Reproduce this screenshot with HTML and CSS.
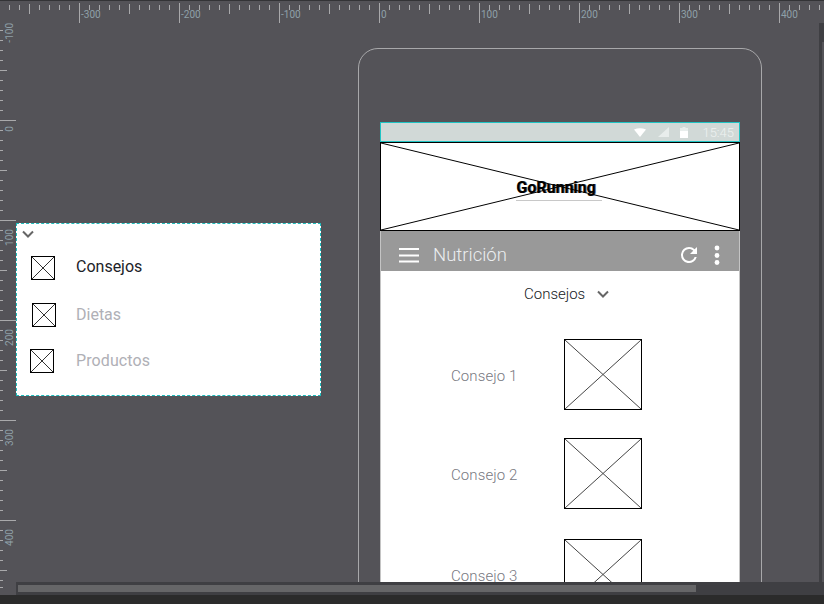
FILE: index.html
```html
<!DOCTYPE html>
<html lang="es">
<head>
    <meta charset="UTF-8">
    <meta name="viewport" content="width=device-width, initial-scale=1.0">
    <title>GoRunning - Nutrición</title>
    <link rel="stylesheet" href="styles.css">
</head>
<body>
    <div class="editor">
        <div class="ruler-top">
            <span class="h-num" style="left: 81px">-300</span>
            <span class="h-num" style="left: 181px">-200</span>
            <span class="h-num" style="left: 281px">-100</span>
            <span class="h-num" style="left: 381px">0</span>
            <span class="h-num" style="left: 481px">100</span>
            <span class="h-num" style="left: 581px">200</span>
            <span class="h-num" style="left: 681px">300</span>
            <span class="h-num" style="left: 781px">400</span>
        </div>

        <div class="middle">
            <div class="ruler-left">
                <span class="v-num" style="top: 0px">-100</span>
                <span class="v-num" style="top: 103px">0</span>
                <span class="v-num" style="top: 206px">100</span>
                <span class="v-num" style="top: 306px">200</span>
                <span class="v-num" style="top: 406px">300</span>
                <span class="v-num" style="top: 506px">400</span>
            </div>

            <div class="canvas">
                <!-- dropdown shown next to the phone -->
                <div class="menu-panel">
                    <svg class="chev chev-panel" viewBox="0 0 12 8"><path d="M1 1.5L6 6.5L11 1.5"/></svg>
                    <div class="menu-item item-a">
                        <svg class="ph" viewBox="0 0 100 100" preserveAspectRatio="none"><path d="M0 0L100 100M100 0L0 100"/></svg>
                        <span class="menu-text active">Consejos</span>
                    </div>
                    <div class="menu-item item-b">
                        <svg class="ph" viewBox="0 0 100 100" preserveAspectRatio="none"><path d="M0 0L100 100M100 0L0 100"/></svg>
                        <span class="menu-text">Dietas</span>
                    </div>
                    <div class="menu-item item-c">
                        <svg class="ph" viewBox="0 0 100 100" preserveAspectRatio="none"><path d="M0 0L100 100M100 0L0 100"/></svg>
                        <span class="menu-text">Productos</span>
                    </div>
                </div>

                <div class="phone">
                    <div class="screen">
                        <div class="status-bar">
                            <svg class="st-icon st-wifi" width="12" height="9" viewBox="0 0 12 9"><path class="st-full" d="M0 1.5Q6 -1 12 1.5L6 9Z"/></svg>
                            <svg class="st-icon" width="11" height="10" viewBox="0 0 11 10"><path class="st-dim" d="M11 0V10H0Z"/></svg>
                            <svg class="st-icon" width="8" height="11" viewBox="0 0 8 11"><path class="st-dim" d="M2.5 0H5.5V1H8V4H0V1H2.5Z"/><path class="st-full" d="M0 4H8V11H0Z"/></svg>
                            <span class="time">15:45</span>
                        </div>
                        <div class="banner">
                            <svg class="banner-x" viewBox="0 0 100 100" preserveAspectRatio="none"><path d="M0 0L100 100M100 0L0 100"/></svg>
                            <span class="logo-text">GoRunning</span>
                        </div>
                        <div class="app-bar">
                            <svg class="burger" width="20" height="16" viewBox="0 0 20 16"><path d="M0 2H20M0 8.5H20M0 14.5H20"/></svg>
                            <span class="app-title">Nutrición</span>
                            <svg class="refresh" width="24" height="24" viewBox="0 0 24 24"><path d="M17.65 6.35A7.96 7.96 0 0 0 12 4a8 8 0 1 0 7.73 10h-2.08A6 6 0 1 1 12 6c1.66 0 3.14.69 4.22 1.78L13 11h7V4z"/></svg>
                            <svg class="dots" width="6" height="20" viewBox="0 0 6 20"><circle cx="3" cy="3" r="2.4"/><circle cx="3" cy="10.5" r="2.4"/><circle cx="3" cy="17.5" r="2.4"/></svg>
                        </div>
                        <div class="picker">
                            <span>Consejos</span>
                            <svg class="chev" viewBox="0 0 12 8"><path d="M1 1.5L6 6.5L11 1.5"/></svg>
                        </div>
                        <div class="tips">
                            <div class="tip">
                                <span class="tip-label">Consejo 1</span>
                                <svg class="tip-img" viewBox="0 0 100 100" preserveAspectRatio="none"><path d="M0 0L100 100M100 0L0 100"/></svg>
                            </div>
                            <div class="tip">
                                <span class="tip-label">Consejo 2</span>
                                <svg class="tip-img" viewBox="0 0 100 100" preserveAspectRatio="none"><path d="M0 0L100 100M100 0L0 100"/></svg>
                            </div>
                            <div class="tip tip-last">
                                <span class="tip-label">Consejo 3</span>
                                <svg class="tip-img" viewBox="0 0 100 100" preserveAspectRatio="none"><path d="M0 0L100 100M100 0L0 100"/></svg>
                            </div>
                        </div>
                    </div>
                </div>
            </div>

            <div class="scroll-v"><div class="scroll-v-thumb"></div></div>
        </div>

        <div class="bottom">
            <div class="ruler-left ruler-stub"></div>
            <div class="scroll-h"><div class="scroll-h-thumb"></div></div>
        </div>
        <div class="footer"></div>
    </div>
</body>
</html>
```

FILE: styles.css
```css
html, body { margin: 0; padding: 0; }
body { width: 824px; height: 604px; overflow: hidden; background-color: #545358; font-family: Roboto, "Liberation Sans", sans-serif; }
svg { display: block; flex: none; }

.editor { display: flex; flex-direction: column; width: 824px; height: 604px; }

/* rulers */
.ruler-top {
    position: relative; height: 23px; flex: none; box-sizing: border-box;
    border-top: 1px solid #333336;
    background-image:
        linear-gradient(to right, #a9a9ab 1px, transparent 1px),
        linear-gradient(to right, #a9a9ab 1px, transparent 1px),
        linear-gradient(to right, #a9a9ab 1px, transparent 1px);
    background-repeat: repeat-x;
    background-size: 100px 20px, 100px 10px, 10px 5px;
    background-position: 79px 2px, 29px 3px, 9px 4px;
}
.h-num { position: absolute; top: 8px; font-size: 10px; line-height: 12px; color: #8fa0a8; }
.middle { display: flex; height: 559px; flex: none; }
.ruler-left {
    position: relative; width: 16px; flex: none;
    background-image:
        linear-gradient(#a9a9ab 1px, transparent 1px),
        linear-gradient(#a9a9ab 1px, transparent 1px),
        linear-gradient(#a9a9ab 1px, transparent 1px);
    background-repeat: repeat-y;
    background-size: 16px 100px, 7px 100px, 3px 10px;
    background-position: 0 97px, 0 47px, 0 7px;
}
.v-num {
    position: absolute; left: 5px; font-size: 10px; line-height: 10px; color: #8fa0a8;
    writing-mode: vertical-rl; transform: rotate(180deg);
}

/* free canvas */
.canvas { position: relative; flex: 1; overflow: hidden; }

.menu-panel {
    position: absolute; left: 0; top: 200px; width: 305px; height: 173px; box-sizing: border-box;
    background-color: white; border: 1px dashed #1fbcbc;
}
.chev { width: 12px; height: 8px; fill: none; stroke: #666; stroke-width: 2; }
.chev-panel { margin: 6px 0 0 5px; }
.menu-item { display: flex; align-items: center; height: 24px; }
.menu-item .ph { width: 24px; height: 24px; box-sizing: border-box; border: 1px solid black; }
.menu-text { position: relative; top: -1px; font-size: 16px; color: #b0b0b6; }
.item-a { margin: 18px 0 0 14px; }
.item-a .menu-text { margin-left: 21px; top: -2px; }
.item-b { margin: 23px 0 0 15px; }
.item-b .menu-text { margin-left: 20px; }
.item-c { margin: 22px 0 0 13px; }
.item-c .menu-text { margin-left: 22px; letter-spacing: 0.1px; }
.ph path { stroke: #333; stroke-width: 1; fill: none; vector-effect: non-scaling-stroke; }
.menu-text.active { color: #1c2228; }

.phone {
    position: absolute; left: 342px; top: 25px; width: 404px; height: 640px; box-sizing: border-box;
    border: 1px solid #a8a8aa; border-radius: 20px; padding: 73px 0 0 21px;
}
.screen { width: 360px; height: 566px; box-sizing: border-box; background-color: white; border: solid #c4c4c4; border-width: 0 1px; }

.status-bar {
    display: flex; align-items: center; justify-content: flex-end; height: 20px; box-sizing: border-box;
    background-color: #d1d9d7; border: 1px solid #1fc4c4; margin: 0 -1px; padding-right: 5px;
}
.st-icon { margin-right: 11px; }
.st-wifi { margin-right: 12px; }
.st-full { fill: white; }
.st-dim { fill: #e8edec; }
.time { margin-left: 3px; font-size: 13px; font-weight: 300; color: #eef2f1; }

.banner { position: relative; display: flex; align-items: center; justify-content: center; height: 89px; box-sizing: border-box; margin: 0 -1px; border: 1px solid black; }
.banner-x { position: absolute; left: 0; top: 0; width: 100%; height: 100%; }
.banner-x path { stroke: black; stroke-width: 1; fill: none; vector-effect: non-scaling-stroke; }
.logo-text {
    position: relative; top: 3px; left: -1px; padding: 0 6px 3px 0; font-size: 16px; font-weight: 700; color: black;
    border-bottom: 1px solid #c8c8c8; text-shadow: 1px 0 0 rgba(0, 0, 0, 0.6);
}

.app-bar { display: flex; align-items: center; height: 40px; box-sizing: border-box; padding: 7px 18px 0; background-color: #999; color: #eee; }
.burger { fill: none; stroke: white; stroke-width: 2.2; }
.app-title { flex: 1; margin-left: 14px; font-size: 18.5px; font-weight: 300; color: #eceef0; }
.refresh { fill: white; margin-right: 13px; }
.dots { fill: white; margin-right: 1px; }

.picker { display: flex; align-items: center; gap: 12px; height: 46px; padding-left: 143px; font-size: 15px; font-weight: 300; color: #15181c; }

.tips { padding-top: 22px; }
.tip { display: flex; align-items: center; height: 71px; padding-left: 70px; margin-bottom: 28px; }
.tip-last { margin-top: 30px; }
.tip-label { width: 113px; padding-top: 3px; font-size: 15px; font-weight: 300; color: #78787f; letter-spacing: 0.1px; }
.tip-img { width: 78px; height: 71px; box-sizing: border-box; border: 1px solid black; }
.tip-img path { stroke: #444; stroke-width: 1; fill: none; vector-effect: non-scaling-stroke; }

/* scrollbars */
.scroll-v { width: 5px; flex: none; background-color: #3f3f43; }
.scroll-v-thumb { margin: 19px 0 0 3px; height: 540px; background-color: #545358; }
.bottom { display: flex; height: 13px; flex: none; }
.ruler-stub { background-position: 0 -485px, 0 47px, 0 -5px; }
.scroll-h { flex: 1; background-color: #3f3f43; padding: 3px 0 0 2px; }
.scroll-h-thumb { width: 678px; height: 7px; background-color: #666668; }
.footer { flex: 1; background-color: #2b2b2b; }
```
